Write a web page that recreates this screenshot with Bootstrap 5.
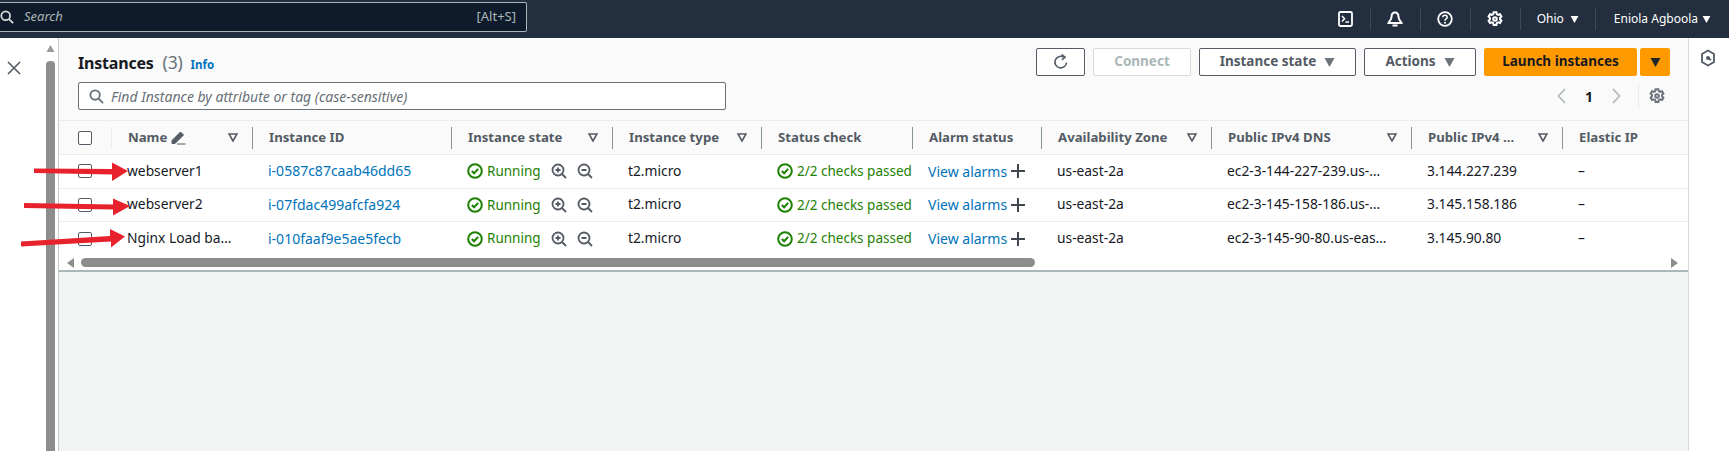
<!DOCTYPE html>
<html lang="en">
<head>
    <meta charset="UTF-8">
    <title>Instances | EC2</title>
    <link href="https://cdn.jsdelivr.net/npm/bootstrap@5.3.0/dist/css/bootstrap.min.css" rel="stylesheet">
    <style>
        html, body { height: 451px; overflow: hidden; }
        body { font-family: "Noto Sans", "Open Sans", sans-serif; font-size: 14px; color: #16191f; background: #fff; }
        svg { display: block; flex: none; }

        .topbar { height: 38px; margin-right: 5px; background: #232f3e; color: #fff; }
        .searchbox { width: 533px; height: 30px; margin: 2px 0 0 -6px; padding: 0 10px 0 6px; background: #0f1b2a; border: 1px solid #aab7b8; border-left: 0; border-radius: 2px; color: #aab7b8; font-size: 13px; }
        .searchbox em { margin-left: 10px; }
        .top-item { height: 22px; padding: 0 17px 0 16px; border-left: 1px solid #3b4857; font-size: 12px; }
        .top-item:first-of-type { border-left: 0; }
        .top-caret { margin-left: 6px; }
        .region-item { padding: 0 16px; }
        .user-item { padding: 0 18px; }
        .user-item .top-caret { margin-left: 4px; }

        .page-body { height: 413px; }
        .side { width: 58px; padding: 7px 3px 0 7px; }
        .vscroll { width: 9px; margin-left: auto; }
        .vscroll-thumb { height: 400px; margin-top: 9px; background: #8d8d8d; border-radius: 4px 4px 0 0; }

        .main-panel { width: 1631px; background: #f2f3f3; border-left: 1px solid #c6cbcc; border-right: 1px solid #d5dbdb; }
        .toolbar { height: 82px; padding: 10px 18px 0 19px; background: #fafafa; }
        .title-text { font-size: 16px; font-weight: 700; letter-spacing: -.2px; line-height: 28px; }
        .title-text span { font-size: 17.500px; font-weight: 400; color: #687078; margin-left: 5px; }
        .info-link { margin-left: 4px; font-size: 11.500px; font-weight: 700; letter-spacing: 0; color: #0073bb; text-decoration: none; }
        .find-box { width: 648px; height: 28px; margin-top: 3px; padding: 0 10px; background: #fff; border: 1px solid #687078; border-radius: 2px; color: #687078; font-size: 14px; }
        .find-box em { margin-left: 7px; }
        .aws-btn { height: 28px; padding: 0; background: #fff; border: 1px solid #545b64; border-radius: 2px; color: #545b64; font-size: 13.500px; font-weight: 700; line-height: 1; }
        .aws-btn:disabled { opacity: 1; background: #fff; border-color: #d5dbdb; color: #aab7b8; }
        .btn-reload { width: 49px; }
        .btn-connect { width: 98px; }
        .btn-state { width: 157px; }
        .btn-actions { width: 112px; }
        .btn-launch { width: 153px; background: #ff9900; border-color: #ff9900; color: #16191f; }
        .btn-launch-caret { width: 30px; background: #ff9900; border-color: #ff9900; }
        .launch-group { gap: 3px; }
        .pager { height: 28px; margin-top: 6px; padding-right: 5px; color: #16191f; font-weight: 700; }
        .pager-num { margin: 0 19px; }
        .pager-gear { height: 26px; margin-left: 17px; padding-left: 10px; border-left: 1px solid #eaeded; }

        .inst-table { table-layout: fixed; width: 1629px; margin: 0; --bs-table-bg: #fff; --bs-table-color: #16191f; font-size: 13.800px; }
        .inst-table th { height: 34px; padding: 5px 0; background: #fafafa; border-top: 1px solid #eaeded; border-bottom: 1px solid #eaeded; vertical-align: middle; }
        .inst-table td { height: 33.500px; padding: 0 0 0 16px; border-bottom: 1px solid #eaeded; vertical-align: middle; white-space: nowrap; overflow: hidden; }
        .inst-table tr:last-child td { border-bottom: 0; }
        .th-inner { height: 22px; padding: 0 14px 0 16px; border-left: 1px solid #879596; color: #545b64; font-size: 13.200px; font-weight: 700; white-space: nowrap; }
        .th-inner.faint { border-left-color: #eaeded; }
        .check-cell { padding-left: 19px; }
        .id-link { color: #0073bb; text-decoration: none; font-size: 14px; }
        .ok-text { color: #1d8102; font-size: 13.500px; }
        .zoom-icon { margin-left: 10px; }
        .check-box { width: 14px; height: 14px; border: 1px solid #545b64; border-radius: 2px; background: #fff; }

        .hscroll { height: 17px; padding: 0 10px 0 8px; background: #fff; border-bottom: 2px solid #aab7b8; }
        .hscroll-thumb { width: 954px; height: 9px; margin-left: 7px; background: #8d8d8d; border-radius: 5px; }

        .rail { flex: 1; padding: 11px 0 0 11px; background: #fff; }
        .arrow-layer { position: absolute; top: 0; left: 0; pointer-events: none; }
    </style>
</head>
<body>
<svg width="0" height="0" class="position-absolute">
    <symbol id="ic-gear" viewBox="0 0 16 16"><g fill="none" stroke="currentColor" stroke-width="2"><path d="M6.600 1.200h2.800l.4 1.900 1.300.7 1.900-.6 1.400 2.400-1.400 1.300v1.400l1.400 1.300-1.400 2.400-1.900-.6-1.300.7-.4 1.900H6.600l-.4-1.900-1.300-.7-1.900.6-1.400-2.400 1.400-1.300V6.900L1.600 5.600 3 3.200l1.900.6 1.300-.7z"/><circle cx="8" cy="8" r="1.800"/></g></symbol>
    <symbol id="ic-check" viewBox="0 0 16 16"><g fill="none" stroke="#1d8102" stroke-width="2"><circle cx="8" cy="8" r="6.800"/><path d="M4.800 8l2.300 2.300 4.100-4.400"/></g></symbol>
    <symbol id="ic-zin" viewBox="0 0 16 16"><g fill="none" stroke="#545b64" stroke-width="1.800"><circle cx="7" cy="7" r="5.500"/><path d="M11 11l4 4M4.500 7h5M7 4.500v5"/></g></symbol>
    <symbol id="ic-zout" viewBox="0 0 16 16"><g fill="none" stroke="#545b64" stroke-width="1.800"><circle cx="7" cy="7" r="5.500"/><path d="M11 11l4 4M4.500 7h5"/></g></symbol>
    <symbol id="ic-plus" viewBox="0 0 14 14"><path d="M7 0v14M0 7h14" stroke="#414750" stroke-width="2"/></symbol>
    <symbol id="ic-sort" viewBox="0 0 10 9"><path d="M1 1h8L5 8z" fill="none" stroke="#545b64" stroke-width="1.600"/></symbol>
    <symbol id="ic-caret" viewBox="0 0 10 9"><path d="M0 0h10L5 9z" fill="currentColor"/></symbol>
</svg>

<nav class="topbar d-flex">
    <div class="searchbox d-flex align-items-center">
        <svg width="14" height="14" viewBox="0 0 16 16"><g fill="none" stroke="#d5dbdb" stroke-width="2"><circle cx="6.500" cy="6.500" r="5"/><path d="M10.300 10.300l4.700 4.700"/></g></svg>
        <em>Search</em>
        <span class="ms-auto">[Alt+S]</span>
    </div>
    <div class="d-flex align-items-center ms-auto">
        <div class="top-item d-flex align-items-center">
            <svg width="15" height="16" viewBox="0 0 15 16"><rect x="1" y="1" width="13" height="14" rx="1.500" fill="none" stroke="#fff" stroke-width="1.800"/><path d="M4 5l2.500 2.800L4 10.600M7.500 11H11" fill="none" stroke="#fff" stroke-width="1.500"/></svg>
        </div>
        <div class="top-item d-flex align-items-center">
            <svg width="16" height="17" viewBox="0 0 16 17"><path d="M8 1.500c-2.500 0-3.500 2-3.500 4.500 0 3-2.500 4.500-3 6h13c-.5-1.500-3-3-3-6C11.500 3.500 10.500 1.500 8 1.500z" fill="none" stroke="#fff" stroke-width="2"/><path d="M5.500 14.500h5" stroke="#fff" stroke-width="2"/></svg>
        </div>
        <div class="top-item d-flex align-items-center">
            <svg width="16" height="16" viewBox="0 0 16 16"><circle cx="8" cy="8" r="6.800" fill="none" stroke="#fff" stroke-width="1.800"/><path d="M5.800 6.300C5.800 5 6.800 4.300 8 4.300s2.200.8 2.200 2c0 1.700-2.200 1.600-2.200 3.400" fill="none" stroke="#fff" stroke-width="1.500"/><circle cx="8" cy="11.700" r="1" fill="#fff"/></svg>
        </div>
        <div class="top-item d-flex align-items-center">
            <svg width="16" height="16" class="text-white"><use href="#ic-gear"/></svg>
        </div>
        <div class="top-item region-item d-flex align-items-center">
            Ohio <svg width="9" height="7" class="text-white top-caret"><use href="#ic-caret"/></svg>
        </div>
        <div class="top-item user-item d-flex align-items-center">
            Eniola Agboola <svg width="9" height="7" class="text-white top-caret"><use href="#ic-caret"/></svg>
        </div>
    </div>
</nav>

<div class="page-body d-flex">
    <aside class="side d-flex">
        <svg class="mt-3" width="14" height="14" viewBox="0 0 14 14"><path d="M1 1l12 12M13 1L1 13" stroke="#545b64" stroke-width="1.600"/></svg>
        <div class="vscroll">
            <svg width="9" height="7" viewBox="0 0 9 7"><path d="M4.500 0l4 7H.5z" fill="#9a9a9a"/></svg>
            <div class="vscroll-thumb"></div>
        </div>
    </aside>

    <main class="main-panel">
        <div class="toolbar d-flex justify-content-between">
            <div>
                <div class="title-text">Instances <span>(3)</span> <a href="#" class="info-link">Info</a></div>
                <div class="find-box d-flex align-items-center">
                    <svg width="15" height="15" viewBox="0 0 16 16"><g fill="none" stroke="#687078" stroke-width="2"><circle cx="6.500" cy="6.500" r="5"/><path d="M10.300 10.300l4.700 4.700"/></g></svg>
                    <em>Find Instance by attribute or tag (case-sensitive)</em>
                </div>
            </div>
            <div>
                <div class="d-flex gap-2 align-items-center">
                    <button class="btn aws-btn btn-reload d-flex align-items-center justify-content-center">
                        <svg width="16" height="16" viewBox="0 0 16 16"><path d="M13.500 8.500A5.800 5.800 0 1 1 10.500 3" fill="none" stroke="#545b64" stroke-width="1.600"/><path d="M8.500 .5l3.500 2.500-3 3" fill="none" stroke="#545b64" stroke-width="1.600"/></svg>
                    </button>
                    <button class="btn aws-btn btn-connect" disabled>Connect</button>
                    <button class="btn aws-btn btn-state d-flex align-items-center justify-content-center gap-2">Instance state <svg width="11" height="9" class="text-secondary"><use href="#ic-caret"/></svg></button>
                    <button class="btn aws-btn btn-actions d-flex align-items-center justify-content-center gap-2">Actions <svg width="11" height="9" class="text-secondary"><use href="#ic-caret"/></svg></button>
                    <div class="d-flex launch-group">
                        <button class="btn aws-btn btn-launch">Launch instances</button>
                        <button class="btn aws-btn btn-launch-caret d-flex align-items-center justify-content-center"><svg width="11" height="9" class="text-dark"><use href="#ic-caret"/></svg></button>
                    </div>
                </div>
                <div class="pager d-flex align-items-center justify-content-end">
                    <svg width="9" height="16" viewBox="0 0 9 16"><path d="M8 1L1.500 8 8 15" fill="none" stroke="#aab7b8" stroke-width="1.600"/></svg>
                    <span class="pager-num">1</span>
                    <svg width="9" height="16" viewBox="0 0 9 16"><path d="M1 1l6.500 7L1 15" fill="none" stroke="#aab7b8" stroke-width="1.600"/></svg>
                    <div class="pager-gear d-flex align-items-center"><svg width="16" height="16" class="text-secondary"><use href="#ic-gear"/></svg></div>
                </div>
            </div>
        </div>

        <table class="table inst-table" id="instTable">
            <colgroup>
                <col style="width:52px"><col style="width:141px"><col style="width:199px"><col style="width:161px"><col style="width:149px"><col style="width:151px"><col style="width:129px"><col style="width:170px"><col style="width:200px"><col style="width:151px"><col>
            </colgroup>
            <thead><tr id="headRow"></tr></thead>
            <tbody id="rows"></tbody>
        </table>

        <div class="hscroll d-flex align-items-center">
            <svg width="7" height="10" viewBox="0 0 7 10"><path d="M7 0v10L0 5z" fill="#8d8d8d"/></svg>
            <div class="hscroll-thumb"></div>
            <svg class="ms-auto" width="7" height="10" viewBox="0 0 7 10"><path d="M0 0v10l7-5z" fill="#8d8d8d"/></svg>
        </div>
    </main>

    <aside class="rail">
        <svg width="16" height="18" viewBox="0 0 16 18"><path d="M8 1.500l6 3.500v8l-6 3.500L2 13V5z" fill="none" stroke="#545b64" stroke-width="1.800"/><path d="M8 9l3 2" stroke="#545b64" stroke-width="1.800"/><circle cx="8" cy="9" r="2" fill="#545b64"/></svg>
    </aside>
</div>

<!-- red arrows drawn over the table -->
<svg class="arrow-layer" width="160" height="260" viewBox="0 0 160 260">
    <g fill="#e8222d">
        <path d="M34 168.500l78 .5v-6.500L128 171l-16 10v-6.500l-78-1.500z"/>
        <path d="M24 203l89 1.500v-6L130 206l-17 9.500v-6l-89-1.500z"/>
        <path d="M21 241.500l89-5.500v-7L125 236.500l-14 11v-6l-90 5z"/>
    </g>
</svg>

<script>
    const headers = [
        ['', false], ['Name', true], ['Instance ID', false], ['Instance state', true], ['Instance type', true],
        ['Status check', false], ['Alarm status', false], ['Availability Zone', true], ['Public IPv4 DNS', true],
        ['Public IPv4 ...', true], ['Elastic IP', false]
    ];
    const instances = [
        ['webserver1', 'i-0587c87caab46dd65', 'ec2-3-144-227-239.us-…', '3.144.227.239'],
        ['webserver2', 'i-07fdac499afcfa924', 'ec2-3-145-158-186.us-…', '3.145.158.186'],
        ['Nginx Load ba…', 'i-010faaf9e5ae5fecb', 'ec2-3-145-90-80.us-eas…', '3.145.90.80']
    ];
    const sortIcon = '<svg width="10" height="9"><use href="#ic-sort"/></svg>';

    document.getElementById('headRow').innerHTML = headers.map(function (h, i) {
        if (i === 0) {
            return '<th><div class="d-flex align-items-center check-cell"><div class="check-box"></div></div></th>';
        }
        let pen = '';
        if (i === 1) {
            pen = '<svg class="ms-1 me-auto" width="15" height="15" viewBox="0 0 15 15"><path d="M1 10.500L9.500 2l3 3L4 13.500H1zM6 14h8.500" fill="#545b64" stroke="#545b64" stroke-width="1"/></svg>';
        }
        return '<th><div class="th-inner d-flex align-items-center justify-content-between' + (i === 1 ? ' faint' : '') + '"><span>' + h[0] + '</span>' + pen + (h[1] ? sortIcon : '') + '</div></th>';
    }).join('');

    document.getElementById('rows').innerHTML = instances.map(function (row) {
        return '<tr>' +
            '<td class="ps-0"><div class="d-flex check-cell"><div class="check-box"></div></div></td>' +
            '<td>' + row[0] + '</td>' +
            '<td><a href="#" class="id-link">' + row[1] + '</a></td>' +
            '<td><div class="d-flex align-items-center"><svg width="16" height="16"><use href="#ic-check"/></svg><span class="ok-text ms-1">Running</span>' +
            '<svg class="zoom-icon" width="16" height="16"><use href="#ic-zin"/></svg><svg class="zoom-icon" width="16" height="16"><use href="#ic-zout"/></svg></div></td>' +
            '<td>t2.micro</td>' +
            '<td><div class="d-flex align-items-center"><svg width="16" height="16"><use href="#ic-check"/></svg><span class="ok-text ms-1">2/2 checks passed</span></div></td>' +
            '<td><div class="d-flex align-items-center"><a href="#" class="id-link">View alarms</a><svg class="ms-1" width="14" height="14"><use href="#ic-plus"/></svg></div></td>' +
            '<td>us-east-2a</td>' +
            '<td>' + row[2] + '</td>' +
            '<td>' + row[3] + '</td>' +
            '<td>–</td>' +
            '</tr>';
    }).join('');
</script>
<script src="https://cdn.jsdelivr.net/npm/bootstrap@5.3.0/dist/js/bootstrap.bundle.min.js"></script>
</body>
</html>
